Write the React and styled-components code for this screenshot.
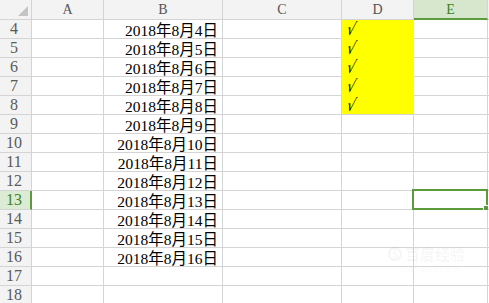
import React from "react";
import styled, { createGlobalStyle } from "styled-components";

const GlobalStyle = createGlobalStyle`
  html, body {
    margin: 0;
    padding: 0;
    background: #ffffff;
    overflow: hidden;
  }
`;

const GRID = "#d4d4d4";
const GREEN = "#5a9b3c";

const Sheet = styled.div`
  position: relative;
  width: 489px;
  height: 303px;
  overflow: hidden;
  display: grid;
  grid-template-columns: 32px 72px 119px 119px 72px 74px 1fr;
  grid-template-rows: 20px;
  grid-auto-rows: 19px;
  font-family: "Liberation Serif", "Noto Sans CJK SC", serif;
`;

const Corner = styled.div`
  position: relative;
  background: #f3f3f3;
  border-right: 1px solid ${GRID};
  border-bottom: 1px solid ${GRID};
  box-sizing: border-box;

  &::after {
    content: "";
    position: absolute;
    right: 3px;
    bottom: 3px;
    width: 0;
    height: 0;
    border-left: 10px solid transparent;
    border-bottom: 10px solid #c4c4c4;
  }
`;

const ColHead = styled.div`
  box-sizing: border-box;
  display: flex;
  align-items: center;
  justify-content: center;
  font-size: 14px;
  padding-top: 1px;
  color: ${(p) => (p.$active ? "#3f7f25" : "#555")};
  background: ${(p) => (p.$active ? "#d6e7cd" : "#f3f3f3")};
  border-right: 1px solid ${GRID};
  border-bottom: ${(p) => (p.$active ? `2px solid ${GREEN}` : `1px solid ${GRID}`)};
`;

const RowHead = styled.div`
  box-sizing: border-box;
  display: flex;
  align-items: center;
  justify-content: center;
  padding-right: ${(p) => (p.$active ? "2px" : "3px")};
  font-size: 16px;
  color: ${(p) => (p.$active ? "#3f7f25" : "#5a5a5a")};
  background: ${(p) => (p.$active ? "#dcebd4" : "#f3f3f3")};
  border-right: ${(p) => (p.$active ? `2px solid ${GREEN}` : `1px solid ${GRID}`)};
  border-bottom: 1px solid ${GRID};
`;

const Cell = styled.div`
  position: relative;
  box-sizing: border-box;
  display: flex;
  align-items: center;
  justify-content: ${(p) => (p.$align === "right" ? "flex-end" : "flex-start")};
  padding: 0 4px 0 5px;
  font-size: 15.5px;
  color: #000;
  white-space: nowrap;
  background: ${(p) => (p.$fill ? "#ffff00" : "#ffffff")};
  border-right: 1px solid ${(p) => (p.$fill ? "#ffff00" : GRID)};
  border-bottom: 1px solid ${(p) => (p.$fill && !p.$lastFill ? "#ffff00" : GRID)};
`;

const Tick = styled.span`
  display: inline-block;
  font-family: "DejaVu Sans", sans-serif;
  font-size: 17px;
  line-height: 1;
  transform: skewX(-14deg) scaleX(0.75);
  margin-left: -1px;
`;

const Selection = styled.div`
  position: absolute;
  left: -2px;
  top: -2px;
  right: -1px;
  bottom: -1px;
  border: 2px solid ${GREEN};
  pointer-events: none;

  &::after {
    content: "";
    position: absolute;
    right: -4px;
    bottom: -4px;
    width: 5px;
    height: 5px;
    background: ${GREEN};
    border: 1px solid #fff;
  }
`;

const Watermark = styled.div`
  position: absolute;
  left: 388px;
  top: 246px;
  display: flex;
  flex-direction: column;
  align-items: flex-start;
  gap: 3px;
  color: rgba(0, 0, 0, 0.045);
  pointer-events: none;
`;

const MarkTop = styled.div`
  display: flex;
  align-items: center;
  gap: 3px;
  font-family: "Noto Sans CJK SC", sans-serif;
  font-weight: 700;
  font-size: 15px;
  line-height: 1;
`;

const MarkLogo = styled.span`
  width: 14px;
  height: 14px;
  border-radius: 50%;
  border: 2px solid rgba(0, 0, 0, 0.045);
  box-sizing: border-box;
  font-size: 10px;
  display: flex;
  align-items: center;
  justify-content: center;
`;

const MarkUrl = styled.div`
  font-family: "Liberation Sans", sans-serif;
  font-size: 9px;
  margin-left: 2px;
`;

const columns = ["A", "B", "C", "D", "E"];
const rows = Array.from({ length: 15 }, (_, i) => i + 4);

function App() {
  return (
    <>
      <GlobalStyle />
      <Sheet>
        <Corner />
        {columns.map((c) => (
          <ColHead key={c} $active={c === "E"}>{c}</ColHead>
        ))}
        <ColHead />

        {rows.map((r) => {
          const hasDate = r <= 16;
          const filled = r <= 8;
          return (
            <React.Fragment key={r}>
              <RowHead $active={r === 13}>{r}</RowHead>
              <Cell />
              <Cell $align="right">{hasDate ? `2018年8月${r}日` : ""}</Cell>
              <Cell />
              <Cell $fill={filled} $lastFill={r === 8}>
                {filled && <Tick>√</Tick>}
              </Cell>
              <Cell>{r === 13 && <Selection />}</Cell>
              <Cell />
            </React.Fragment>
          );
        })}

        <Watermark>
          <MarkTop>
            <MarkLogo>S</MarkLogo>
            百度经验
          </MarkTop>
          <MarkUrl>jingyan.baidu.com</MarkUrl>
        </Watermark>
      </Sheet>
    </>
  );
}

export default App;
